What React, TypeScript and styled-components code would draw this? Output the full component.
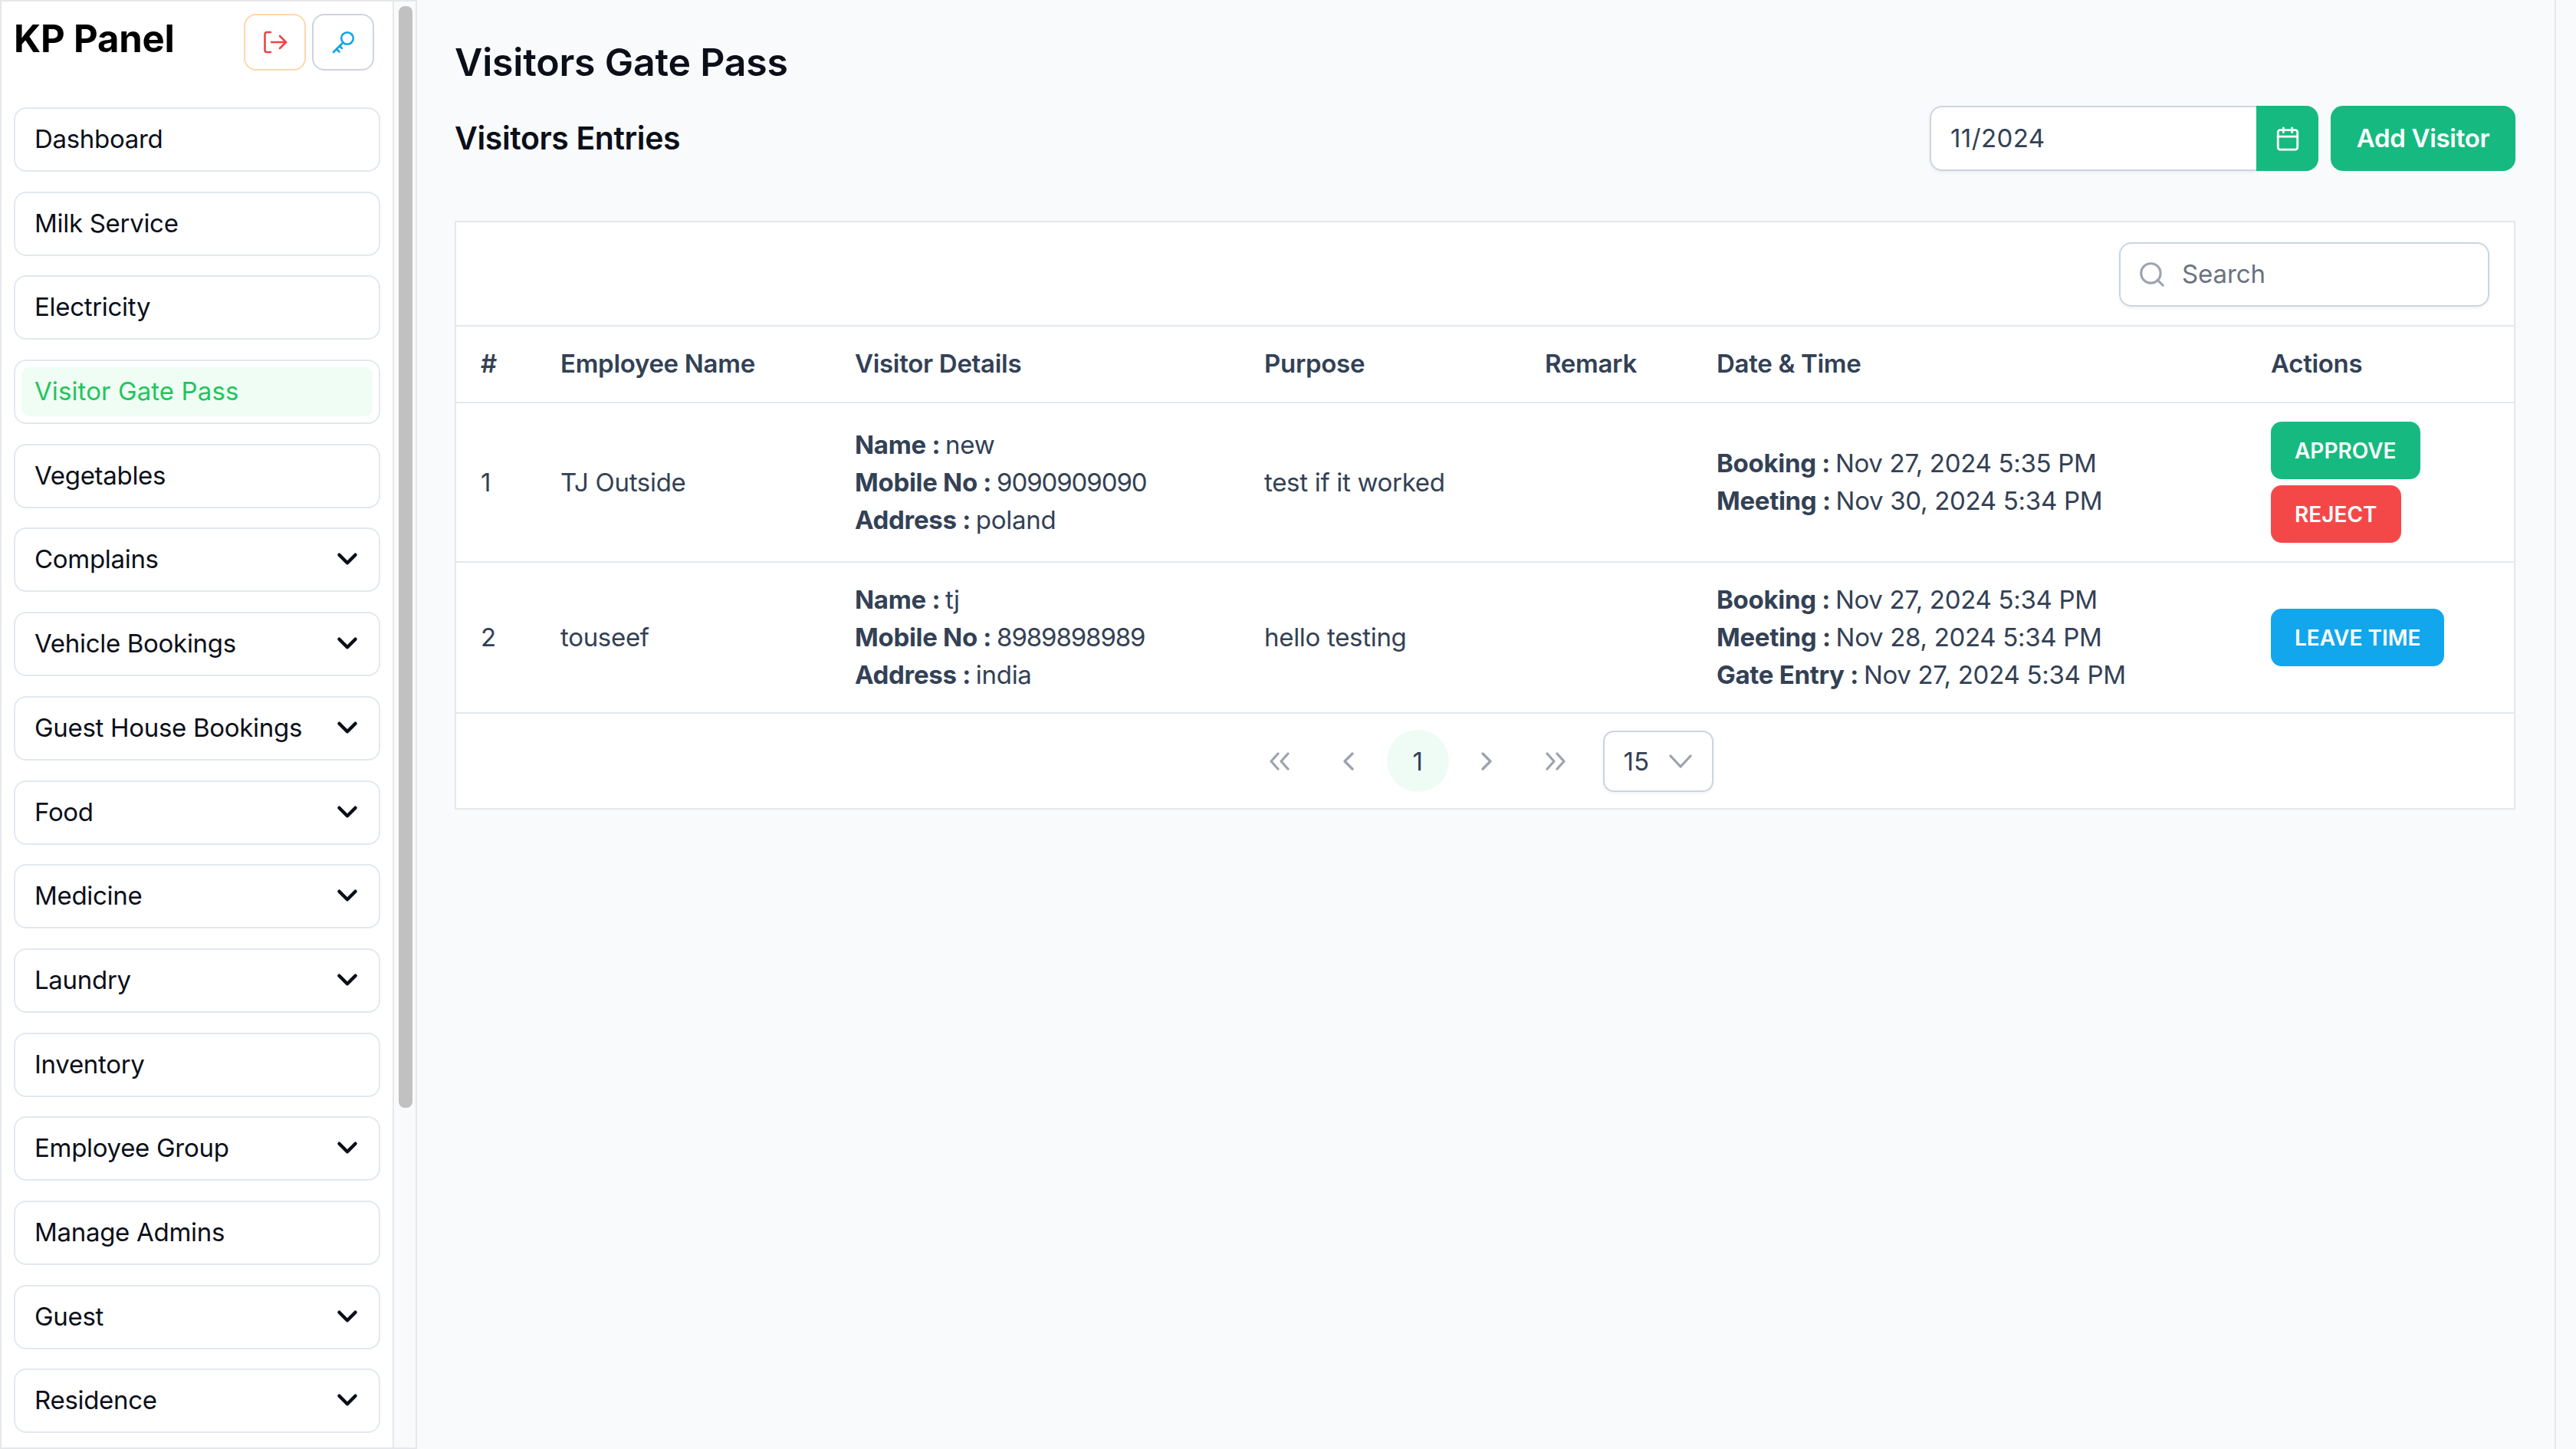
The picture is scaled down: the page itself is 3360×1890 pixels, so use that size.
import styled, { createGlobalStyle } from "styled-components";
import { Calendar, ChevronDown, ChevronLeft, ChevronRight, Search } from "lucide-react";

const GlobalStyle = createGlobalStyle`
  * { box-sizing: border-box; }
  html, body {
    margin: 0;
    height: 100%;
    overflow: hidden;
    background: #f9fafb;
    font-family: "Inter", "Liberation Sans", sans-serif;
  }
  #root { height: 100%; }
`;

const Page = styled.div`
  display: flex;
  height: 1890px;
  background: #f9fafb;
  letter-spacing: -0.3px;
`;

const Sidebar = styled.aside`
  display: flex;
  flex: 0 0 544px;
  height: 1890px;
  border: 2px solid #e5e7eb;
  background: #f9fafb;
  overflow: hidden;
`;

const SidebarInner = styled.div`
  flex: 0 0 512px;
  background: #fff;
  border-right: 2px solid #e5e7eb;
  padding: 16px 16px 0;
`;

const ScrollTrack = styled.div`
  flex: 1;
  padding: 6px 4px 0 6px;
`;

const ScrollThumb = styled.div`
  height: 1437px;
  border-radius: 8px;
  background: #c1c1c1;
`;

const Brand = styled.div`
  display: flex;
  align-items: center;
  height: 74px;
  margin-bottom: 48px;
  padding-right: 8px;
`;

const Logo = styled.h1`
  margin: 0 auto 10px 0;
  font-size: 49px;
  font-weight: 700;
  letter-spacing: -0.2px;
  color: #000;
`;

const IconButton = styled.button<{ $tone: string }>`
  display: flex;
  align-items: center;
  justify-content: center;
  width: 81px;
  height: 74px;
  margin-left: 8px;
  padding: 0;
  background: #fff;
  border: 2px solid ${(p) => p.$tone};
  border-radius: 16px;
`;

const Nav = styled.nav`
  display: flex;
  flex-direction: column;
  gap: 25.7px;
`;

const NavItem = styled.div`
  height: 84px;
  padding: 8px;
  border: 2px solid #e2e8f0;
  border-radius: 16px;
  background: #fff;
`;

const NavLabel = styled.div<{ $active?: boolean }>`
  display: flex;
  align-items: center;
  justify-content: space-between;
  height: 64px;
  padding: 0 12px 2px 17px;
  border-radius: 10px;
  font-size: 33px;
  letter-spacing: ${(p) => (p.$active ? "0.1px" : "-0.3px")};
  color: ${(p) => (p.$active ? "#22c55e" : "#0b0f19")};
  background: ${(p) => (p.$active ? "#f0fdf4" : "transparent")};
`;

const Main = styled.main`
  flex: 0 0 2789px;
  height: 1890px;
  padding: 45px 51px 0 49px;
  border-right: 2px solid #e5e7eb;
`;

const Title = styled.h2`
  margin: 0 0 21px;
  font-size: 50px;
  line-height: 72px;
  font-weight: 600;
  letter-spacing: -0.2px;
  color: #0b0f19;
`;

const SubHeader = styled.div`
  display: flex;
  align-items: center;
  height: 85px;
  margin-bottom: 65px;
`;

const SubTitle = styled.h3`
  margin: 0 auto 2px 0;
  font-size: 41px;
  font-weight: 600;
  letter-spacing: -0.4px;
  color: #0b0f19;
`;

const MonthField = styled.div`
  display: flex;
  width: 507px;
  height: 85px;
  margin-right: 16px;
`;

const MonthInput = styled.input`
  flex: 1;
  min-width: 0;
  padding: 0 25px 2px;
  border: 2px solid #cbd5e1;
  border-right: 0;
  border-radius: 16px 0 0 16px;
  background: #fff;
  box-shadow: 0 2px 4px rgba(15, 23, 42, 0.06);
  font: 400 33px "Inter", sans-serif;
  letter-spacing: 0.4px;
  color: #334155;
  outline: none;
`;

const MonthButton = styled.div`
  display: flex;
  align-items: center;
  justify-content: center;
  flex: 0 0 81px;
  background: #16ba80;
  border-radius: 0 16px 16px 0;
`;

const AddButton = styled.button`
  width: 241px;
  height: 85px;
  padding: 0 0 2px;
  border: 0;
  border-radius: 16px;
  background: #16ba80;
  color: #fff;
  font: 600 33px "Inter", sans-serif;
  letter-spacing: -0.3px;
`;

const Card = styled.section`
  background: #fff;
  border: 2px solid #e5e7eb;
`;

const Toolbar = styled.div`
  display: flex;
  justify-content: flex-end;
  height: 134px;
  padding: 26px 32px 0 0;
`;

const SearchBox = styled.label`
  display: flex;
  align-items: center;
  width: 483px;
  height: 84px;
  padding-left: 22px;
  border: 2px solid #cbd5e1;
  border-radius: 16px;
  box-shadow: 0 2px 4px rgba(15, 23, 42, 0.06);
`;

const SearchInput = styled.input`
  flex: 1;
  min-width: 0;
  margin-left: 20px;
  padding: 0 0 3px;
  border: 0;
  outline: none;
  background: transparent;
  font: 400 33px "Inter", sans-serif;
  letter-spacing: -0.1px;
  color: #334155;

  &::placeholder { color: #6b7280; opacity: 1; }
`;

const Table = styled.table`
  width: 100%;
  table-layout: fixed;
  border-collapse: collapse;
  font-size: 33px;
  line-height: 49px;
  color: #334155;
`;

const HeadCell = styled.th`
  height: 100px;
  padding: 0 0 2px 34px;
  text-align: left;
  font-weight: 600;
  border-top: 2px solid #e2e8f0;
  border-bottom: 2px solid #e2e8f0;

  &:first-child { padding-left: 32px; }
`;

const Row = styled.tr`
  border-bottom: 2px solid #e2e8f0;
`;

const Cell = styled.td`
  padding: 24px 0 24px 34px;
  vertical-align: middle;
  white-space: nowrap;

  &:first-child { padding-left: 32px; }
`;

const Line = styled.div`
  strong {
    margin-right: -2px;
    font-weight: 700;
  }
`;

const Phone = styled.span`
  letter-spacing: -1.1px;
`;

const ActionStack = styled.div`
  display: flex;
  flex-direction: column;
  align-items: flex-start;
  gap: 8px;
`;

const ActionButton = styled.button<{ $color: string }>`
  height: 75px;
  padding: 0 31px;
  border: 0;
  border-radius: 14px;
  background: ${(p) => p.$color};
  color: #fff;
  font: 600 28px "Inter", sans-serif;
  text-transform: uppercase;
`;

const Pager = styled.div`
  display: flex;
  align-items: center;
  justify-content: center;
  gap: 9px;
  height: 123px;
  padding-right: 11px;
`;

const PageButton = styled.div<{ $current?: boolean }>`
  display: flex;
  align-items: center;
  justify-content: center;
  width: 81px;
  height: 81px;
  border-radius: 50%;
  font-size: 33px;
  color: #334155;
  background: ${(p) => (p.$current ? "#effcf6" : "transparent")};
`;

const PageSize = styled.div`
  display: flex;
  align-items: center;
  justify-content: space-between;
  width: 144px;
  height: 80px;
  margin-left: 12px;
  padding: 0 26px 0 25px;
  border: 2px solid #cbd5e1;
  border-radius: 14px;
  box-shadow: 0 2px 4px rgba(15, 23, 42, 0.06);
  font-size: 33px;
  letter-spacing: 0;
  color: #334155;
`;

const navItems = [
  { label: "Dashboard" },
  { label: "Milk Service" },
  { label: "Electricity" },
  { label: "Visitor Gate Pass", active: true },
  { label: "Vegetables" },
  { label: "Complains", more: true },
  { label: "Vehicle Bookings", more: true },
  { label: "Guest House Bookings", more: true },
  { label: "Food", more: true },
  { label: "Medicine", more: true },
  { label: "Laundry", more: true },
  { label: "Inventory" },
  { label: "Employee Group", more: true },
  { label: "Manage Admins" },
  { label: "Guest", more: true },
  { label: "Residence", more: true },
];

const columns = [
  { title: "#", width: 102 },
  { title: "Employee Name", width: 384 },
  { title: "Visitor Details", width: 534 },
  { title: "Purpose", width: 366 },
  { title: "Remark", width: 224 },
  { title: "Date & Time", width: 723 },
  { title: "Actions", width: 351 },
];

function LogoutIcon() {
  return (
    <svg width="32" height="32" viewBox="0 0 32 32" fill="none" stroke="#ef4444" strokeWidth="2.6" strokeLinecap="round" strokeLinejoin="round">
      <path d="M10 3H5a2.5 2.5 0 0 0-2.5 2.500v21A2.500 2.500 0 0 0 5 29h5" />
      <path d="M11 16h19" />
      <path d="M22 8l8 8-8 8" />
    </svg>
  );
}

function KeyIcon() {
  return (
    <svg width="32" height="32" viewBox="0 0 32 32" fill="none" stroke="#0ea5e9" strokeWidth="2.6" strokeLinecap="round" strokeLinejoin="round">
      <circle cx="21" cy="11" r="7.800" />
      <path d="M15.500 16.500L3 29" />
      <path d="M7 25l3.500 3.500" />
      <path d="M11 21l3 3" />
    </svg>
  );
}

function DoubleChevron({ flip }: { flip?: boolean }) {
  return (
    <svg width="26" height="24" viewBox="0 0 26 24" fill="none" stroke="#9ca3af" strokeWidth="3.2" strokeLinecap="round" strokeLinejoin="round">
      <path d={flip ? "M2 2l9 10-9 10M15 2l9 10-9 10" : "M11 2L2 12l9 10M24 2l-9 10 9 10"} />
    </svg>
  );
}

function SelectChevron() {
  return (
    <svg width="30" height="20" viewBox="0 0 30 20" fill="none" stroke="#9ca3af" strokeWidth="3.2" strokeLinecap="round" strokeLinejoin="round">
      <path d="M2 3l13 14L28 3" />
    </svg>
  );
}

export default function App() {
  return (
    <>
      <GlobalStyle />
      <Page>
        <Sidebar>
          <SidebarInner>
            <Brand>
              <Logo>KP Panel</Logo>
              <IconButton $tone="#fed7aa">
                <LogoutIcon />
              </IconButton>
              <IconButton $tone="#cbd5e1">
                <KeyIcon />
              </IconButton>
            </Brand>
            <Nav>
              {navItems.map((item) => (
                <NavItem key={item.label}>
                  <NavLabel $active={item.active}>
                    {item.label}
                    {item.more && <ChevronDown size={42} strokeWidth={2.6} color="#0b0f19" />}
                  </NavLabel>
                </NavItem>
              ))}
            </Nav>
          </SidebarInner>
          <ScrollTrack>
            <ScrollThumb />
          </ScrollTrack>
        </Sidebar>

        <Main>
          <Title>Visitors Gate Pass</Title>
          <SubHeader>
            <SubTitle>Visitors Entries</SubTitle>
            <MonthField>
              <MonthInput readOnly value="11/2024" />
              <MonthButton>
                <Calendar size={34} strokeWidth={2} color="#fff" />
              </MonthButton>
            </MonthField>
            <AddButton>Add Visitor</AddButton>
          </SubHeader>

          <Card>
            <Toolbar>
              <SearchBox>
                <Search size={38} strokeWidth={2} color="#9ca3af" />
                <SearchInput placeholder="Search" />
              </SearchBox>
            </Toolbar>
            <Table>
              <colgroup>
                {columns.map((col) => (
                  <col key={col.title} width={col.width} />
                ))}
              </colgroup>
              <thead>
                <tr>
                  {columns.map((col) => (
                    <HeadCell key={col.title}>{col.title}</HeadCell>
                  ))}
                </tr>
              </thead>
              <tbody>
                <Row>
                  <Cell>1</Cell>
                  <Cell>TJ Outside</Cell>
                  <Cell>
                    <Line><strong>Name :</strong> new</Line>
                    <Line><strong>Mobile No :</strong> <Phone>9090909090</Phone></Line>
                    <Line><strong>Address :</strong> poland</Line>
                  </Cell>
                  <Cell>test if it worked</Cell>
                  <Cell />
                  <Cell>
                    <Line><strong>Booking :</strong> Nov 27, 2024 5:35 PM</Line>
                    <Line><strong>Meeting :</strong> Nov 30, 2024 5:34 PM</Line>
                  </Cell>
                  <Cell>
                    <ActionStack>
                      <ActionButton $color="#16ba80">Approve</ActionButton>
                      <ActionButton $color="#f44848">Reject</ActionButton>
                    </ActionStack>
                  </Cell>
                </Row>
                <Row>
                  <Cell>2</Cell>
                  <Cell>touseef</Cell>
                  <Cell>
                    <Line><strong>Name :</strong> tj</Line>
                    <Line><strong>Mobile No :</strong> <Phone>8989898989</Phone></Line>
                    <Line><strong>Address :</strong> india</Line>
                  </Cell>
                  <Cell>hello testing</Cell>
                  <Cell />
                  <Cell>
                    <Line><strong>Booking :</strong> Nov 27, 2024 5:34 PM</Line>
                    <Line><strong>Meeting :</strong> Nov 28, 2024 5:34 PM</Line>
                    <Line><strong>Gate Entry :</strong> Nov 27, 2024 5:34 PM</Line>
                  </Cell>
                  <Cell>
                    <ActionButton $color="#12a7ec">Leave Time</ActionButton>
                  </Cell>
                </Row>
              </tbody>
            </Table>
            <Pager>
              <PageButton><DoubleChevron /></PageButton>
              <PageButton><ChevronLeft size={40} strokeWidth={2} color="#9ca3af" /></PageButton>
              <PageButton $current>1</PageButton>
              <PageButton><ChevronRight size={40} strokeWidth={2} color="#9ca3af" /></PageButton>
              <PageButton><DoubleChevron flip /></PageButton>
              <PageSize>
                15
                <SelectChevron />
              </PageSize>
            </Pager>
          </Card>
        </Main>
      </Page>
    </>
  );
}
